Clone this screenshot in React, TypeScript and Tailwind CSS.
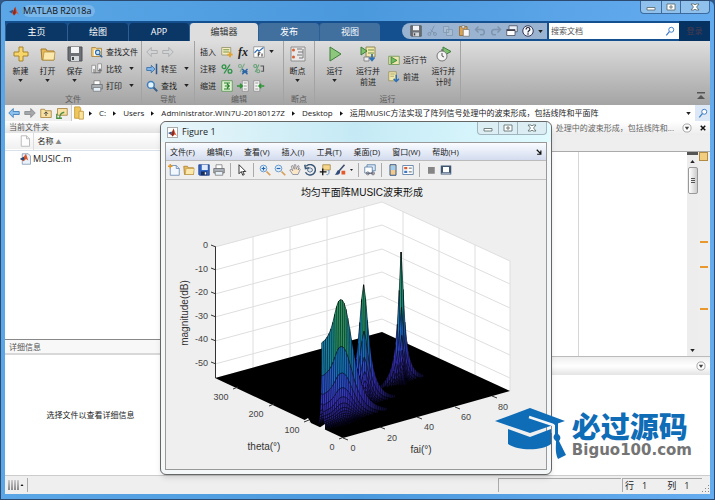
import React, { useMemo } from 'react'

const ICONS = {
    plus: <path d="M6 1h4v5h5v4h-5v5H6v-5H1V6h5z" fill="#f6d56a" stroke="#a8842a" />,
    open: <>
        <path d="M1 3h5l1 2h7v9H2z" fill="#e8b95a" stroke="#a47a2c" />
        <path d="M4 6h11l-1 8H3z" fill="#fbe8ac" stroke="#b58d3c" strokeWidth=".7" />
    </>,
    save: <>
        <path d="M1 1h14v14H2L1 14z" fill="#6d7176" stroke="#4d5054" />
        <path d="M4 1h8v6H4z" fill="#f2f4f6" />
        <path d="M4 10h8v5H4z" fill="#d3d8dd" />
        <path d="M5 11h2v3H5z" fill="#444" />
    </>,
    saveBlue: <>
        <path d="M1 1h14v14H2L1 14z" fill="#2f63c0" stroke="#1b3c86" />
        <path d="M5 1h8v7H5z" fill="#dfeafc" />
        <path d="M4 10h8v5H4z" fill="#1a2c58" />
        <path d="M9 11h2v3H9z" fill="#fff" />
    </>,
    findFile: <>
        <path d="M1 2h5l1 1h7v11H1z" fill="#f3cf7d" stroke="#a0782e" />
        <path d="M4 5h9v8H4z" fill="#fff" />
        <circle cx="9" cy="8.500" r="3" fill="#cfe6fa" stroke="#2f6ca8" strokeWidth="1.500" />
        <path d="m11 11 4 4" stroke="#2f6ca8" strokeWidth="2" />
    </>,
    compare: <>
        <path d="M1 3h5v10H1zM9 1h5v9H9z" fill="#f4f4f4" stroke="#888" />
        <path d="M4 8v5h8v-4M10 11l2-3 2 3" fill="none" stroke="#777" strokeWidth="1.500" />
    </>,
    print: <>
        <path d="M4 1h8v6H4z" fill="#fff" stroke="#777" />
        <path d="M1 6h14v6H1z" fill="#a9b0b8" stroke="#666" />
        <path d="M3 10h10v5H3z" fill="#e6f0f8" stroke="#777" />
    </>,
    back: <path d="M1 8l6-6v4h8v4H7v4z" fill="#d2d4d6" stroke="#a2a4a6" />,
    fwd: <path d="M15 8L9 2v4H1v4h8v4z" fill="#d2d4d6" stroke="#a2a4a6" />,
    backBlue: <path d="M1 8l6-6v4h8v4H7v4z" fill="#8cc0ee" stroke="#2f6fae" />,
    fwdDark: <path d="M15 8L9 2v4H1v4h8v4z" fill="#a5a8ab" stroke="#808386" />,
    goTo: <>
        <path d="M12 8L7 3v3H1v4h6v3z" fill="#7fb5e8" stroke="#2c67a3" />
        <path d="M14 1v14" stroke="#2c5788" strokeWidth="2" />
    </>,
    find: <>
        <circle cx="6.500" cy="6.500" r="4.500" fill="#e5f3fd" stroke="#3f7fbd" strokeWidth="2" />
        <path d="m10 10 5 5" stroke="#3a5f8a" strokeWidth="2.500" />
    </>,
    search: <>
        <circle cx="10" cy="6" r="4" fill="#fff" stroke="#3a7cc4" strokeWidth="1.500" />
        <path d="m7 9-5 6" stroke="#3a7cc4" strokeWidth="2" />
    </>,
    insert: <>
        <path d="M1 2h12v10H1z" fill="#f5edc0" stroke="#8a8a60" />
        <path d="M3 5h8M3 8h8" stroke="#78984b" strokeWidth="1.500" />
        <path d="M12 8v7M8.500 11.500h7" stroke="#e3a12c" strokeWidth="2.500" />
    </>,
    plotFi: <>
        <path d="M1 1h14v14H1z" fill="#fff" stroke="#888" />
        <path d="m2 9 4-4 2 2 6-5" fill="none" stroke="#2f6cb3" strokeWidth="1.500" />
        <path d="M7 14V9h3M7 11h2M12 10v4" fill="none" stroke="#222" strokeWidth="1.300" />
    </>,
    percent: <g fill="none" stroke="#2f9347" strokeWidth="1.800">
        <circle cx="4" cy="5" r="2.500" /><circle cx="12" cy="11" r="2.500" /><path d="M12 2 4 14" />
    </g>,
    percentX: <g fill="none" strokeWidth="1.500">
        <g stroke="#7daa88"><circle cx="4" cy="4" r="2" /><path d="M10 1 4 12" /></g>
        <path d="m7 8 7 7M14 8l-7 7M7 11.500h7" stroke="#2b66a6" strokeWidth="2" />
    </g>,
    percentWrap: <g fill="none" strokeWidth="1.500">
        <g stroke="#66a276"><circle cx="3" cy="4" r="2" /><circle cx="7" cy="11" r="2" /><path d="M8 2 3 12" /></g>
        <path d="M10 4h4v7h-3" stroke="#555" />
    </g>,
    smartIndent: <>
        <path d="M1 1h14v14H1z" fill="#dff2d2" stroke="#4c9145" />
        <path d="M4 4h8M4 12h8M5 8h6M8 5l3 3-3 3" fill="none" stroke="#27802c" strokeWidth="1.500" />
    </>,
    indent: <>
        <path d="M7 1h8v14H7z" fill="#f5f5f5" stroke="#888" />
        <path d="M9 4h4M9 8h4M9 12h4" stroke="#777" />
        <path d="M0 8h7M4 5l3 3-3 3" fill="none" stroke="#2d9436" strokeWidth="2" />
    </>,
    outdent: <>
        <path d="M1 1h8v14H1z" fill="#f5f5f5" stroke="#888" />
        <path d="M3 4h4M3 8h3M3 12h4" stroke="#777" />
        <path d="M15 8H8M11 5 8 8l3 3" fill="none" stroke="#2d9436" strokeWidth="2" />
    </>,
    breakpoint: <>
        <path d="M1 1h14v14H1z" fill="#e9e9e9" stroke="#8d8d8d" />
        <circle cx="3.500" cy="4" r="1.500" fill="#d8602e" /><circle cx="3.500" cy="11" r="1.500" fill="#d8602e" />
        <path d="M7 3h5M8 6h5M7 9h5M9 12h4M13 3v9" fill="none" stroke="#777" />
    </>,
    run: <path d="M3 1v14l11-7z" fill="#8cc77d" stroke="#3f7d3b" />,
    runAdvance: <>
        <path d="M6 1h9v10H6z" fill="#f3e7a9" stroke="#8f8a58" />
        <path d="M8 4h6M8 7h6" stroke="#6e9350" />
        <path d="M1 1v8l6-4z" fill="#7fc371" stroke="#3f7d3b" />
        <path d="M4 11h5v4H4z" fill="#eee" stroke="#888" />
        <path d="M12 8v6M9.500 11.500l2.500 3 2.500-3" fill="none" stroke="#2f70b5" strokeWidth="1.700" />
    </>,
    runSection: <>
        <path d="M1 3h14v11H1z" fill="#efe6ae" stroke="#5f8f4c" />
        <path d="M4 4v9l8-4.500z" fill="#6fbb60" stroke="#2f7a31" />
    </>,
    advance: <>
        <path d="M1 1h10v12H1z" fill="#f3e7a9" stroke="#8f8a58" />
        <path d="M3 4h6M3 7h5" stroke="#9a9a66" />
        <path d="M11 5v9M7.500 10.500 11 14l3.500-3.500" fill="none" stroke="#2f70b5" strokeWidth="2" />
    </>,
    runTime: <>
        <path d="M7 1v9l8-4.500z" fill="#7fc371" stroke="#3f7d3b" />
        <circle cx="6" cy="10" r="5" fill="#f3f3f3" stroke="#777" />
        <path d="M6 7v3l2 1M6 3v2" fill="none" stroke="#555" />
    </>,
    cut: <g fill="none" stroke="#7f95ae" strokeWidth="1.300"><path d="M11 1 6 11M6 6l5 5" /><circle cx="4.500" cy="12" r="2" /><circle cx="12" cy="12" r="2" /></g>,
    copy: <path d="M2 2h7v8H2zM6 6h8v8H6z" fill="#a9bdd3" stroke="#7f95ae" />,
    paste: <><path d="M2 2h10v12H2z" fill="#dba24f" stroke="#8b6428" /><path d="M5 1h4v3H5zM7 6h8v9H7z" fill="#f8f8f8" stroke="#777" /></>,
    undo: <path d="M2 6h8c5 0 5 7 0 7H8M6 2 2 6l4 4" fill="none" stroke="#7f95ae" strokeWidth="2" />,
    redo: <path d="M14 6H6c-5 0-5 7 0 7h2M10 2l4 4-4 4" fill="none" stroke="#7f95ae" strokeWidth="2" />,
    windows: <><path d="M4 1h11v8H4z" fill="#e8eef5" stroke="#445" /><path d="M1 6h11v8H1z" fill="#fff" stroke="#445" /><path d="M1 7h11" stroke="#445" strokeWidth="2" /></>,
    help: <><circle cx="8" cy="8" r="7" fill="#f4f7fb" stroke="#335" strokeWidth="1.300" /><path d="M5.500 6c0-4 5-3 5-.500C10.500 8 8 7.500 8 10M8 11v2" fill="none" stroke="#223" strokeWidth="1.600" /></>,
    folderUp: <><path d="M1 3h5l1 2h8v9H1z" fill="#f7e0a2" stroke="#a0782e" /><path d="M8 12V7M5.500 9 8 6.500 10.500 9" fill="none" stroke="#444" strokeWidth="1.300" /></>,
    folderGo: <><path d="M2 2h13v9H2z" fill="#f7e0a2" stroke="#a0782e" /><path d="M5 14c0-4 1-6 6-7M1 9v6h7" fill="none" stroke="#4c8e42" strokeWidth="1.700" /></>,
    folder: <><path d="M3 1h6l1 2v11H3z" fill="#f0c75d" stroke="#c59a3c" /><path d="M8 6h5v9H8z" fill="#f9e3a0" stroke="#c59a3c" /></>,
    page: <path d="M3 1h7l4 4v10H3zM10 1v4h4" fill="#fdfdfd" stroke="#aaa" />,
    mfile: <>
        <path d="M3 1h8l3 3v11H3z" fill="#e9f2fa" stroke="#7c93ab" />
        <path d="m0 8 5-3 3-4 3 9-3-2-3 3z" fill="#d9552b" /><path d="m0 8 5-3 1 3-2 2z" fill="#1f4c7c" />
    </>,
    newFig: <><path d="M3 2h8l4 4v9H3z" fill="#f2f8ff" stroke="#5b7ea8" /><path d="M11 2v4h4" fill="none" stroke="#5b7ea8" /><path d="M3 0v6M0 3h6" stroke="#e39a2c" strokeWidth="2" /></>,
    pointer: <path d="M4 1v12l3-3 2 5 2-1-2-4h4z" fill="#fff" stroke="#222" strokeWidth="1.200" />,
    zoomIn: <><circle cx="6" cy="6" r="4.500" fill="#dcecfb" stroke="#6e9cca" strokeWidth="1.300" /><path d="M6 3.500v5M3.500 6h5" stroke="#2463b0" strokeWidth="1.500" /><path d="m10 10 5 5" stroke="#d89e58" strokeWidth="2.300" /></>,
    zoomOut: <><circle cx="6" cy="6" r="4.500" fill="#dcecfb" stroke="#6e9cca" strokeWidth="1.300" /><path d="M3.500 6h5" stroke="#2463b0" strokeWidth="1.500" /><path d="m10 10 5 5" stroke="#d89e58" strokeWidth="2.300" /></>,
    hand: <path d="M5 14 1 8l2-1 2 2-2-6 2-1 2 5V1h2l.500 6L12 2l1.500 1L12 8l2-2 1 1-3 7z" fill="#fbe6c6" stroke="#6f7690" strokeWidth=".9" />,
    rotate: <><path d="M3 3a7 7 0 1 1-1 8M1 1l1 5 5-1" fill="none" stroke="#3c5878" strokeWidth="2" /><path d="m8 5 3 1.500v3L8 11 5 9.500v-3z" fill="#dce6f0" stroke="#3c5878" /></>,
    cursorTip: <><path d="M5 1h10v7H5z" fill="#f6d68a" stroke="#9d8044" /><path d="M5 6v9M1 10.500h9" stroke="#111" strokeWidth="1.800" /><path d="M10 14c3 1 4-2 3-6" fill="none" stroke="#3d72b8" /></>,
    brush: <><path d="m14 1-7 8" stroke="#3c4e6d" strokeWidth="2" /><path d="M7 8C3 8 4 13 1 14c4 1 8 0 7-5z" fill="#2f4c7c" /><path d="M10 9h5v5h-5z" fill="#e4592b" /></>,
    link: <><path d="M4 1h11v8H4z" fill="#d9e8f7" stroke="#4c739e" /><path d="M1 4h10v8H1z" fill="#fff" stroke="#4c739e" /><path d="M4 12.500h9" stroke="#556" strokeWidth="1" /><circle cx="5" cy="12.500" r="2" fill="none" stroke="#556" /><circle cx="12" cy="12.500" r="2" fill="none" stroke="#556" /></>,
    colorbar: <><path d="M4 1h8v14H4z" fill="#f2c98c" stroke="#2c5287" strokeWidth="1.300" /><path d="M5 2h6v6H5z" fill="#9ccdf0" /></>,
    legend: <><path d="M1 2h14v12H1z" fill="#fff" stroke="#456b98" /><path d="M3 4h4v3H3z" fill="#d85a2f" /><path d="M3 9h4v3H3z" fill="#3f78c0" /><path d="M9 5.500h4M9 10.500h4" stroke="#333" /></>,
    hidePlot: <path d="M4 4h9v9H4z" fill="#858585" />,
    dock: <><path d="M1 2h14v12H1z" fill="#3f5673" /><path d="M4 4h8v7H4z" fill="#fff" /><path d="M2 12.500h12" stroke="#c6d4e4" /></>,
    dropCircle: <><circle cx="8" cy="8" r="6.500" fill="#fff" stroke="#777" /><path d="M4.500 6h7L8 11z" fill="#444" /></>,
    membrane: <><path d="m0 9 6-3 2 3-3 3z" fill="#2c5b92" /><path d="m5 11 5-10 3 8 3 5-4-3-4 4z" fill="#d9532a" /><path d="m10 1 1 10-3 4-2-4z" fill="#8f2a20" /></>,
}

const Icon = ({ name, className = 'size-3' }: { name: keyof typeof ICONS, className?: string }) => (
    <svg viewBox="0 0 16 16" className={`shrink-0 ${className}`} aria-hidden="true">{ICONS[name]}</svg>
)

const Caret = () => (
    <svg viewBox="0 0 6 4" className="h-[3px] w-[5px] shrink-0" aria-hidden="true"><path d="M0 0h6L3 4z" fill="#222" /></svg>
)

const BigButton = ({ icon, lines, caret = false, wide = false }: any) => (
    <button className={`flex flex-col items-center ${wide ? 'w-9' : 'w-[27px]'}`}>
        <span className="flex h-[22px] items-center"><Icon name={icon} className="size-4" /></span>
        {lines.map(line => <span key={line} className="leading-[11px] whitespace-nowrap">{line}</span>)}
        {caret && <span className="flex h-2 items-center"><Caret /></span>}
    </button>
)

const SmallButton = ({ icon, label, caret = false }: any) => (
    <button className="flex h-[17px] items-center gap-[3px] whitespace-nowrap">
        <Icon name={icon} />
        <span>{label}</span>
        {caret && <span className="ml-1"><Caret /></span>}
    </button>
)

const Group = ({ title, width, children }: any) => (
    <section className={`flex shrink-0 flex-col border-r border-[#a3a3a3] ${width}`}>
        <div className="flex h-[52px] pt-[2px]">{children}</div>
        <h2 className="h-3 text-center leading-3 text-[#5c5c5c]">{title}</h2>
    </section>
)

const TABS = [
    { label: '主页', className: 'w-[62px] bg-[#0b3766] text-white' },
    { label: '绘图', className: 'w-[61px] bg-[#0b3766] text-white' },
    { label: 'APP', className: 'w-[61px] bg-[#0b3766] text-white' },
    { label: '编辑器', className: 'w-[69px] bg-[#dedede] text-[#333]' },
    { label: '发布', className: 'w-[61px] bg-[#41709f] text-white' },
    { label: '视图', className: 'w-[61px] bg-[#41709f] text-white' },
]

const TabStrip = () => (
    <nav className="flex h-5 shrink-0 items-end bg-[#14508f] text-[9px]">
        {TABS.map(tab => (
            <button key={tab.label} className={`h-[18px] shrink-0 rounded-t border-l border-[#2d5f94] ${tab.className}`}>
                {tab.label}
            </button>
        ))}
        <div className="flex-1" />
        <div className="mb-[2px] flex h-4 items-center gap-1 rounded-l-lg bg-[#99b3d1] pr-1 pl-2">
            <button aria-label="Save"><Icon name="save" /></button>
            <button aria-label="Cut"><Icon name="cut" /></button>
            <button aria-label="Copy"><Icon name="copy" /></button>
            <button aria-label="Paste"><Icon name="paste" /></button>
            <button aria-label="Undo"><Icon name="undo" /></button>
            <button aria-label="Redo"><Icon name="redo" /></button>
            <button aria-label="Windows"><Icon name="windows" /></button>
            <button aria-label="Help"><Icon name="help" /></button>
            <Caret />
        </div>
        <label className="mb-[2px] ml-[2px] flex h-4 w-[130px] items-center bg-white pr-1 pl-[2px]">
            <input aria-label="搜索文档" placeholder="搜索文档" className="min-w-0 flex-1 text-[8px] outline-none placeholder:text-[#555]" />
            <Icon name="search" className="size-[10px]" />
        </label>
        <button className="h-full w-[31px] bg-[#063261] text-[8px] text-[#4a3a4c]">登录</button>
    </nav>
)

const ToolStrip = () => (
    <div className="flex h-16 shrink-0 bg-linear-to-b from-[#dedede] to-[#a4a4a4]">
        <Group title="文件" width="w-[137px]">
            <div className="ml-[2px] flex w-[84px]">
                <BigButton icon="plus" lines={['新建']} caret />
                <BigButton icon="open" lines={['打开']} caret />
                <BigButton icon="save" lines={['保存']} caret />
            </div>
            <div>
                <SmallButton icon="findFile" label="查找文件" />
                <SmallButton icon="compare" label="比较" caret />
                <SmallButton icon="print" label="打印" caret />
            </div>
        </Group>
        <Group title="导航" width="w-[53px]">
            <div className="pl-1">
                <div className="flex h-[17px] items-center gap-1">
                    <button aria-label="Back"><Icon name="back" /></button>
                    <button aria-label="Forward"><Icon name="fwd" /></button>
                </div>
                <SmallButton icon="goTo" label="转至" caret />
                <SmallButton icon="find" label="查找" caret />
            </div>
        </Group>
        <Group title="编辑" width="w-[89px]">
            <div className="grid grid-cols-[17px_12px_12px_12px_5px] content-start items-center gap-x-1 pl-[5px] *:h-[17px]">
                <span className="leading-[17px]">插入</span>
                <button aria-label="Section"><Icon name="insert" /></button>
                <button className="font-['Liberation_Serif',serif] text-[12px] leading-3 font-bold italic">fx</button>
                <button aria-label="Plot"><Icon name="plotFi" /></button>
                <button aria-label="More" className="flex items-center"><Caret /></button>
                <span className="leading-[17px]">注释</span>
                <button aria-label="Comment"><Icon name="percent" /></button>
                <button aria-label="Uncomment"><Icon name="percentX" /></button>
                <button aria-label="Wrap comments"><Icon name="percentWrap" /></button>
                <span />
                <span className="leading-[17px]">缩进</span>
                <button aria-label="Smart indent"><Icon name="smartIndent" /></button>
                <button aria-label="Indent"><Icon name="indent" /></button>
                <button aria-label="Outdent"><Icon name="outdent" /></button>
            </div>
        </Group>
        <Group title="断点" width="w-[31px]">
            <BigButton icon="breakpoint" lines={['断点']} caret />
        </Group>
        <Group title="运行" width="w-[146px]">
            <div className="ml-[6px]"><BigButton icon="run" lines={['运行']} caret /></div>
            <div className="ml-[2px]"><BigButton icon="runAdvance" lines={['运行并', '前进']} wide /></div>
            <div className="ml-[2px] pt-2">
                <SmallButton icon="runSection" label="运行节" />
                <SmallButton icon="advance" label="前进" />
            </div>
            <div className="flex-1" />
            <BigButton icon="runTime" lines={['运行并', '计时']} wide />
        </Group>
        <div className="flex flex-1 items-end justify-end p-[5px]">
            <button aria-label="Minimize toolstrip">
                <svg viewBox="0 0 8 8" className="size-2"><path d="M0 0h8v1.500H0zM4 3l4 4H0z" fill="#555" /></svg>
            </button>
        </div>
    </div>
)

const PATH = ['C:', 'Users', 'Administrator.WIN7U-20180127Z', 'Desktop', '运用MUSIC方法实现了阵列信号处理中的波束形成，包括线阵和平面阵']

const AddressBar = () => (
    <div className="flex h-4 shrink-0 items-center bg-white">
        <div className="flex h-full items-center gap-1 border-r border-[#ccc] bg-[#f0f0f0] px-[3px]">
            <button aria-label="Back"><Icon name="backBlue" /></button>
            <button aria-label="Forward"><Icon name="fwdDark" /></button>
            <button aria-label="Up"><Icon name="folderUp" /></button>
            <button aria-label="Browse"><Icon name="folderGo" /></button>
        </div>
        <Icon name="folder" className="-mr-1 size-[14px]" />
        {PATH.map(part => (
            <React.Fragment key={part}>
                <svg viewBox="0 0 4 6" className="mx-[7px] h-[5px] w-[3px] shrink-0"><path d="M0 0v6l4-3z" fill="#111" /></svg>
                <button className="whitespace-nowrap">{part}</button>
            </React.Fragment>
        ))}
        <div className="flex-1" />
        <Caret />
        <button aria-label="Search folder" className="ml-1 flex h-full w-[15px] items-center justify-center bg-[#dce8f6]">
            <Icon name="search" className="size-[10px]" />
        </button>
    </div>
)

const FilePanel = () => (
    <aside className="flex w-40 shrink-0 flex-col border-r border-[#bbb] bg-white">
        <h2 className="h-3 bg-linear-to-b from-white to-[#e2e2e2] pl-1 leading-3 text-[#555]">当前文件夹</h2>
        <table className="w-full text-left">
            <thead>
                <tr className="h-[17px] border-b border-[#d9e2ea] bg-linear-to-b from-white to-[#f0f0f0]">
                    <th className="w-7 border-r border-[#ddd] pl-[14px]"><Icon name="page" /></th>
                    <th className="pl-1 font-normal">名称 <span className="text-[6px] text-[#888]">▲</span></th>
                </tr>
            </thead>
            <tbody>
                <tr className="h-[17px]">
                    <td className="pl-[15px]"><Icon name="mfile" /></td>
                    <td className="text-[9px]">MUSIC.m</td>
                </tr>
            </tbody>
        </table>
        <div className="flex-1" />
        <h2 className="h-4 shrink-0 border-t border-[#888] border-b-2 border-b-[#d8d8d8] bg-[#f8f8f8] pl-1 leading-[14px] text-[#555]">详细信息</h2>
        <div className="flex h-30 shrink-0 items-center justify-center pl-3">选择文件以查看详细信息</div>
    </aside>
)

const EditorPanel = () => (
    <main className="flex min-w-0 flex-1 flex-col bg-white">
        <div className="flex h-[14px] shrink-0 items-center gap-2 bg-linear-to-b from-white to-[#ececec] pr-1 text-[#666]">
            <h2 className="flex-1 overflow-hidden text-right whitespace-nowrap">处理中的波束形成，包括线阵和...</h2>
            <button aria-label="Editor menu"><Icon name="dropCircle" className="size-[10px]" /></button>
            <button aria-label="Close editor">
                <svg viewBox="0 0 8 8" className="size-[6px]"><path d="m1 1 6 6M7 1 1 7" stroke="#111" strokeWidth="2" /></svg>
            </button>
        </div>
        <div className="h-[17px] shrink-0 border-b border-[#aaa] bg-[#eee]" />
        <div className="flex flex-1">
            <div className="flex-1" />
            <div className="w-[109px] border-l border-[#d6d6d6]" />
            <div className="flex w-[11px] flex-col items-center justify-between bg-[#ededed]">
                <div className="flex w-full flex-col items-center">
                    <div className="h-[3px] w-full bg-[#555]" />
                    <div className="flex h-3 items-center"><svg viewBox="0 0 6 4" className="h-[3px] w-[5px]"><path d="M0 4h6L3 0z" fill="#222" /></svg></div>
                    <div className="flex h-[27px] w-[10px] flex-col items-center justify-center gap-px rounded-xs border border-[#999] bg-linear-to-r from-white to-[#ccc]">
                        <div className="h-px w-1 bg-[#555]" />
                        <div className="h-px w-1 bg-[#555]" />
                        <div className="h-px w-1 bg-[#555]" />
                    </div>
                </div>
                <div className="mb-1"><Caret /></div>
            </div>
            <div className="flex w-3 flex-col items-center bg-[#eee] pr-px">
                <div className="size-[9px] border border-[#b08c45] bg-[#f2cd80]" />
                <div className="mt-20 h-[2px] w-2 bg-[#e9982d]" />
                <div className="mt-[23px] h-[2px] w-2 bg-[#e9982d]" />
                <div className="mt-10 h-[2px] w-2 bg-[#e9982d]" />
            </div>
        </div>
        <div className="flex h-[19px] shrink-0 items-center justify-end border-t border-[#bbb] bg-linear-to-b from-[#eee] via-white to-[#e4e4e4] pr-1">
            <button aria-label="Command window menu"><Icon name="dropCircle" className="size-[10px]" /></button>
        </div>
        <div className="h-25 shrink-0" />
    </main>
)

const PEAKS = [
    { fai: 10, theta: 60, height: 129, spread: 8, power: 2.4, depth: 1.6 },
    { fai: 30, theta: 99, height: 127, spread: 3.4, power: 1.7, depth: 1.6 },
    { fai: 59, theta: 145, height: 137, spread: 1.9, power: 1.5, depth: 1.4 },
]

// height above the floor, already in drawing units
const surface = (fai: number, theta: number) => {
    const heights = PEAKS.map((peak, i) => {
        const d = Math.abs(fai - peak.fai)
        let across = 1 / (1 + (d / peak.spread) ** peak.power)
        if (i === 0 && fai < peak.fai) {
            across = 0.68 + 0.32 / (1 + (d / 4) ** 2.6)
        }
        const along = 1 / (1 + (Math.abs(theta - peak.theta) / peak.depth) ** 1.2)
        return peak.height * across * along - 6
    })
    return Math.max(0, ...heights)
}

const project = (fai: number, theta: number, h = 0) => [
    343 + 1.855 * fai - 0.354 * theta,
    438 - 0.522 * fai - 0.1667 * theta - h,
]

const colorOf = (h: number) => {
    const stops = [
        [0, 10, 10, 36], [8, 40, 34, 125], [25, 62, 56, 205], [42, 48, 88, 220],
        [58, 26, 122, 205], [76, 24, 146, 175], [92, 40, 160, 115], [115, 80, 160, 85], [137, 170, 140, 60],
    ]
    const i = Math.max(1, stops.findIndex(s => s[0] >= h))
    const a = stops[i - 1]
    const b = stops[i]
    const k = Math.min(1, (h - a[0]) / (b[0] - a[0]))
    return `rgb(${[1, 2, 3].map(n => Math.round(a[n] + (b[n] - a[n]) * k)).join(',')})`
}

const line = (...points: number[][]) => points.map(p => p.join(',')).join(' ')

const SurfacePlot = () => {
    const cells = useMemo(() => {
        const result: { points: string, fill: string }[] = []
        for (let theta = 170; theta >= 35; theta--) {
            for (let fai = 80; fai >= 0; fai--) {
                const corners = [[fai, theta], [fai + 1, theta], [fai + 1, theta + 1], [fai, theta + 1]]
                const heights = corners.map(([f, t]) => surface(f, t))
                const mean = heights.reduce((a, b) => a + b, 0) / 4
                if (mean < 1) {
                    continue
                }
                result.push({
                    points: corners.map(([f, t], i) => project(f, t, heights[i]).map(n => n.toFixed(1)).join(',')).join(' '),
                    fill: colorOf(mean)
                })
            }
        }
        return result
    }, [])

    return (
        <svg viewBox="166 180 380 289" className="min-h-0 w-full flex-1 font-['Liberation_Sans','Noto_Sans_CJK_SC',sans-serif]" fontSize="9" fill="#444">
            <polygon points="215,247 382,202 510,261 510,391 382,332 215,378" fill="#fff" />
            <g fill="none" stroke="#dedede">
                {[247, 270, 294, 317, 341, 364].map(y => <polyline key={y} points={line([215, y], [382, y - 45], [510, y + 14])} />)}
                {[253, 290, 327, 364].map(x => <path key={x} d={`M${x} ${247 - (x - 215) * 0.27}v131`} />)}
                {[403, 439, 475, 510].map(x => <path key={x} d={`M${x} ${202 + (x - 382) * 0.46}v130`} />)}
            </g>
            <polygon points="215,378 382,332 510,391 343,438" fill="#000" />
            {cells.map(cell => <polygon key={cell.points} points={cell.points} fill={cell.fill} stroke="#000" strokeWidth=".4" />)}
            <path d="m303 421 5-3 3 5zM319 428l6-4v6z" fill="#efefef" />
            <g stroke="#333" fill="none">
                <path d="M215.500 247v131" />
                {[247, 270, 294, 317, 341, 364].map(y => <path key={y} d={`M211 ${y - 2}l5 2`} />)}
                <path d="m233 389 5-2M269 406l5-2M304 422l5-2M339 439l5-2" />
                <path d="m343 438 5 2M380 427l5 2M417 417l5 2M455 407l5 2M492 396l5 2" />
            </g>
            <g textAnchor="end">
                {[0, -10, -20, -30, -40, -50].map((value, i) => <text key={value} x="208" y={Math.round(248 + i * 23.5)}>{value}</text>)}
            </g>
            <g textAnchor="middle">
                <text x="221" y="400">300</text>
                <text x="256" y="417">200</text>
                <text x="292" y="433">100</text>
                <text x="332" y="450">0</text>
                <text x="353" y="451">0</text>
                <text x="392" y="441">20</text>
                <text x="429" y="430">40</text>
                <text x="466" y="420">60</text>
                <text x="503" y="410">80</text>
            </g>
            <g textAnchor="middle" fontSize="10" fill="#333">
                <text x="362" y="196" fill="#111">均匀平面阵MUSIC波束形成</text>
                <text x="264" y="450">theta(°)</text>
                <text x="421" y="453">fai(°)</text>
                <text transform="translate(188 313) rotate(-90)">magnitude(dB)</text>
            </g>
        </svg>
    )
}

const WindowButtons = ({ className }: { className: string }) => (
    <div className={`flex h-[13px] rounded-b-sm border border-t-0 *:flex *:w-5 *:items-center *:justify-center ${className}`}>
        <button aria-label="Minimize"><svg viewBox="0 0 10 8" className="h-2 w-[10px]"><path d="M1 4.500h8v2.500H1z" fill="#fff" stroke="#566" strokeWidth=".8" /></svg></button>
        <button aria-label="Maximize" className="border-x border-inherit"><svg viewBox="0 0 10 8" className="h-2 w-[10px]"><path d="M1 1h8v6H1zM4 3h2v2H4z" fill="#fff" stroke="#566" strokeWidth=".8" /></svg></button>
        <button aria-label="Close" className="min-w-7"><svg viewBox="0 0 10 8" className="h-2 w-[10px]"><path d="M1 1h3l1 1 1-1h3L6.500 4 9 7H6L5 6 4 7H1l2.500-3z" fill="#fff" stroke="#566" strokeWidth=".8" /></svg></button>
    </div>
)

const MENUS = ['文件(F)', '编辑(E)', '查看(V)', '插入(I)', '工具(T)', '桌面(D)', '窗口(W)', '帮助(H)']
const FIGURE_TOOLS: (keyof typeof ICONS | null)[] = [
    'newFig', 'open', 'saveBlue', 'print', null, 'pointer', null, 'zoomIn', 'zoomOut', 'hand', 'rotate',
    'cursorTip', 'brush', null, 'link', null, 'colorbar', 'legend', null, 'hidePlot', 'dock'
]

const FigureWindow = () => (
    <div className="absolute top-[120px] right-[162px] bottom-6 left-[159px] flex flex-col rounded-md border border-[#666] bg-[#f4f8f9] px-1 pb-1 shadow-md">
        <header className="-mx-1 flex h-5 shrink-0 items-start justify-between rounded-t-md bg-linear-to-r from-[#e9f6fa] via-[#c5eaf5] to-[#e1fbff] pr-1 pl-[6px]">
            <div className="flex h-5 items-center gap-1 text-[9px] text-[#222]">
                <span className="border border-[#aaa] bg-white"><Icon name="membrane" className="size-[9px]" /></span>
                Figure 1
            </div>
            <WindowButtons className="border-[#9fb6c0] bg-[#dceef3]" />
        </header>
        <div className="flex min-h-0 flex-1 flex-col border border-[#999] bg-[#efefef]">
            <nav className="flex h-[18px] shrink-0 items-center gap-3 border-b border-[#bbb] bg-linear-to-b from-[#fafcff] to-[#d3dcef] px-1">
                {MENUS.map(menu => <button key={menu} className="whitespace-nowrap">{menu}</button>)}
                <div className="flex-1" />
                <svg viewBox="0 0 8 8" className="size-[6px]"><path d="m1 1 5 5M6.500 2v5h-5" fill="none" stroke="#111" strokeWidth="1.600" /></svg>
            </nav>
            <div className="flex h-[19px] shrink-0 items-center gap-[3px] border-b border-[#c2c2c2] px-[2px]">
                {FIGURE_TOOLS.map((tool, i) => tool
                    ? <button key={tool} aria-label={tool} className="flex items-center gap-1">
                        <Icon name={tool} />
                        {tool === 'brush' && <svg viewBox="0 0 6 4" className="h-[2px] w-[3px]"><path d="M0 0h6L3 4z" fill="#222" /></svg>}
                    </button>
                    : <span key={i} className="mx-[2px] h-[14px] w-px bg-[#aaa]" />
                )}
            </div>
            <SurfacePlot />
        </div>
    </div>
)

const StatusBar = () => (
    <footer className="flex h-[19px] shrink-0 items-center border-t border-[#ccc] bg-[#efefef] text-[9px] text-[#222]">
        <div className="flex h-[14px] items-center gap-px border-r border-[#aaa] px-[3px]">
            {[0, 1, 2, 3].map(bar => <div key={bar} className="h-[10px] w-[2px] bg-linear-to-b from-[#ccc] to-[#888]" />)}
            <svg viewBox="0 0 6 4" className="h-[2px] w-1"><path d="M0 4h6L3 0z" fill="#111" /></svg>
        </div>
        <div className="flex-1" />
        <div className="h-[14px] w-[123px] border-t border-l border-[#aaa]" />
        <div className="ml-px flex h-[14px] w-[80px] items-center gap-2 border-t border-l border-[#aaa] pl-[2px]">
            <span>行</span><span>1</span><span className="ml-3">列</span><span>1</span>
        </div>
        <svg viewBox="0 0 8 8" className="mt-2 size-2"><path d="M6 0h1v1H6zM3 3h1v1H3zM6 3h1v1H6zM0 6h1v1H0zM3 6h1v1H3zM6 6h1v1H6z" fill="#888" /></svg>
    </footer>
)

const Brand = () => (
    <a href="#" className="absolute right-[22px] bottom-10 flex items-center gap-[6px]">
        <svg viewBox="0 0 71 52" className="h-[52px] w-[71px]" aria-hidden="true">
            <path d="M0 14 35 1l35 13-35 12z" fill="#0f6cb6" />
            <path d="M13 22v15c10 7 34 7 43 0V22l-21 8z" fill="#0f6cb6" />
            <path d="m34 10 24 8v8" fill="none" stroke="#f4f6f8" strokeWidth="2.500" />
            <path d="m58 16 5-2v13c3 2 3 5 1 7l7 14-8 4c-3-6-2-12-2-18-3-2-3-5-1-7v-9z" fill="#0f6cb6" />
        </svg>
        <span className="flex flex-col">
            <span className="font-['Noto_Sans_CJK_SC',sans-serif] text-[29px] leading-[34px] font-black text-[#0f6cb6]">必过源码</span>
            <span className="font-['DejaVu_Sans',sans-serif] text-[15px] leading-4 font-bold text-[#747474]">Biguo100.com</span>
        </span>
    </a>
)

export default function App() {
    return (
        <div className="bg-[#31598a] font-['Open_Sans','Noto_Sans_CJK_SC',sans-serif] text-[8px] leading-[12px] text-[#222]">
            <div className="relative flex min-h-screen flex-col rounded-t-md border border-[#2c4a70] bg-linear-to-r from-[#5aa6e6] via-[#4b99dd] to-[#65acef] px-1 pb-[5px]">
                <header className="flex h-5 shrink-0 items-start justify-between">
                    <h1 className="flex h-5 items-center gap-1 pl-1 text-[9px] text-[#111]">
                        <Icon name="membrane" className="size-[10px]" />
                        <span className="rounded-full bg-white/20 pr-1">MATLAB R2018a</span>
                    </h1>
                    <WindowButtons className="border-[#3b6b9e] bg-[#8fc1ec]" />
                </header>
                <TabStrip />
                <ToolStrip />
                <AddressBar />
                <div className="flex flex-1">
                    <FilePanel />
                    <EditorPanel />
                </div>
                <StatusBar />
                <FigureWindow />
                <Brand />
            </div>
        </div>
    )
}
